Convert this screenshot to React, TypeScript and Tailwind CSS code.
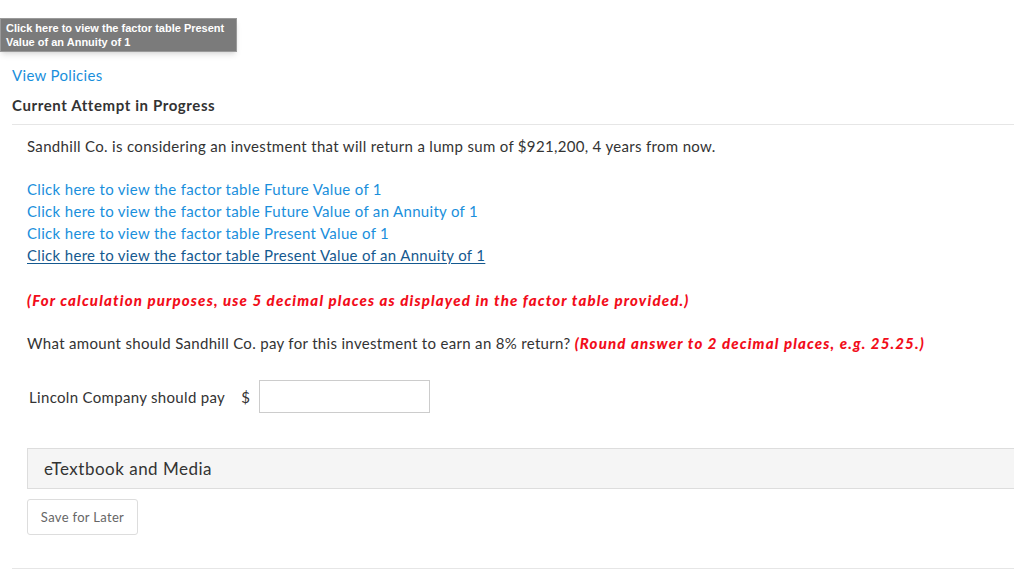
import React from 'react';

const links = [
  'Click here to view the factor table Future Value of 1',
  'Click here to view the factor table Future Value of an Annuity of 1',
  'Click here to view the factor table Present Value of 1',
];

const App: React.FC = () => {
  return (
    <div className="relative min-h-[570px] bg-white text-[#333333]" style={{ fontFamily: 'Lato, "Open Sans", sans-serif' }}>
      {/* hovered tooltip */}
      <div
        className="absolute left-0 top-[18px] z-10 w-[237px] border border-[#9a9a9a] bg-[#7b7b7b] px-[5px] py-[2px] text-[11px] font-bold leading-[14px] text-white shadow-md"
        style={{ fontFamily: '"Liberation Sans", Arial, sans-serif' }}
      >
        Click here to view the factor table Present Value of an Annuity of 1
      </div>

      <div className="pl-3 pt-[64px] tracking-[0.32px]">
        <a className="block text-[15px] leading-[22px] text-[#1a8fdc]">View Policies</a>
        <h2 className="mt-[8px] text-[15px] font-bold leading-[22px] tracking-[0.6px] text-[#333333]">Current Attempt in Progress</h2>
        <div className="mt-[8px] border-t border-[#e6e6e6]" />

        <div className="pl-[15px] pt-[10px] text-[15px] leading-[22px]">
          <p>Sandhill Co. is considering an investment that will return a lump sum of $921,200, 4 years from now.</p>

          <div className="mt-[21px] flex flex-col">
            {links.map((l) => (
              <a key={l} className="text-[#1a8fdc]">{l}</a>
            ))}
            <a className="self-start text-[#15598f] underline underline-offset-[2px]">
              Click here to view the factor table Present Value of an Annuity of 1
            </a>
          </div>

          <p className="mt-[23px] font-black italic tracking-[1.15px] text-[#f20d1a]">
            (For calculation purposes, use 5 decimal places as displayed in the factor table provided.)
          </p>

          <p className="mt-[21px]">
            What amount should Sandhill Co. pay for this investment to earn an 8% return?{' '}
            <span className="font-black italic tracking-[1.15px] text-[#f20d1a]">(Round answer to 2 decimal places, e.g. 25.25.)</span>
          </p>

          <div className="mt-[26px] flex items-center pl-[2px]">
            <span className="mr-[16px]">Lincoln Company should pay</span>
            <span className="mr-[9px]">$</span>
            <input className="h-[33px] w-[171px] border border-[#cccccc] bg-white outline-none" />
          </div>

          <div className="mt-[35px] flex h-[41px] items-center border border-r-0 border-[#dddddd] bg-[#f5f5f5] pl-[16px] text-[17px] tracking-[0.5px] text-[#333333]">
            eTextbook and Media
          </div>

          <button className="mt-[10px] h-[36px] w-[111px] rounded-[3px] border border-[#dddddd] bg-white text-[13px] text-[#666666]">
            Save for Later
          </button>
        </div>

        <div className="mt-[33px] border-t border-[#e6e6e6]" />
      </div>
    </div>
  );
};

export default App;
